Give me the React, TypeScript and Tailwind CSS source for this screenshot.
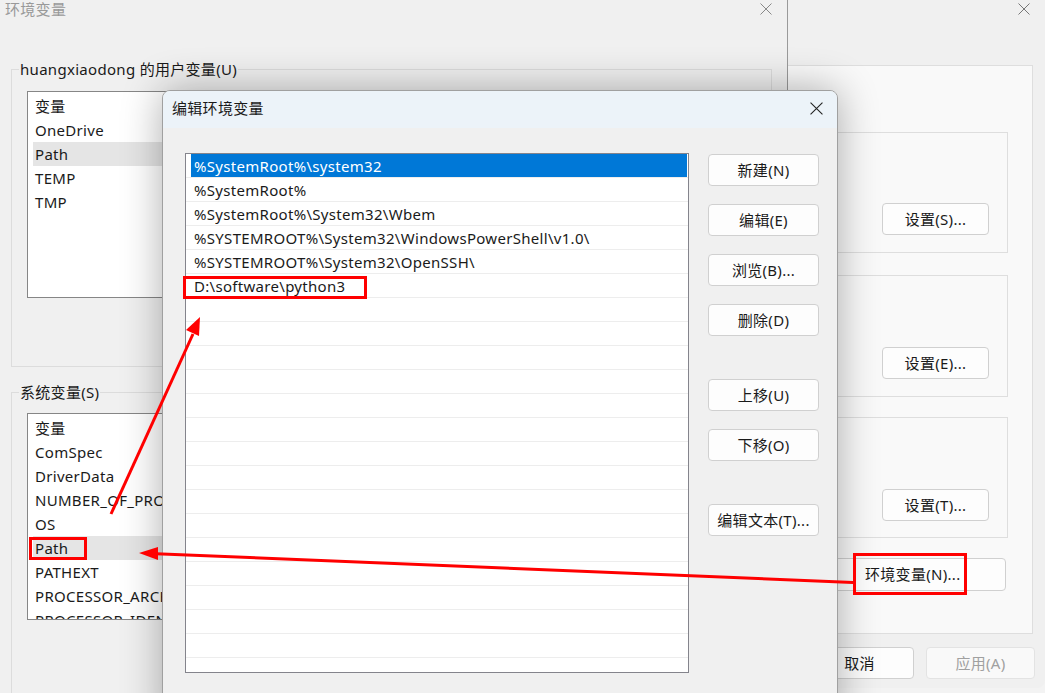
import type { ReactNode } from 'react'

const userVars = ['OneDrive', 'Path', 'TEMP', 'TMP']
const systemVars = [
  'ComSpec',
  'DriverData',
  'NUMBER_OF_PROCESSORS',
  'OS',
  'Path',
  'PATHEXT',
  'PROCESSOR_ARCHITECTURE',
  'PROCESSOR_IDENTIFIER',
]
const pathEntries = [
  '%SystemRoot%\\system32',
  '%SystemRoot%',
  '%SystemRoot%\\System32\\Wbem',
  '%SYSTEMROOT%\\System32\\WindowsPowerShell\\v1.0\\',
  '%SYSTEMROOT%\\System32\\OpenSSH\\',
  'D:\\software\\python3',
]

function CloseIcon({ className }: { className?: string }) {
  return (
    <svg viewBox="0 0 12 12" className={className} fill="none" stroke="currentColor" strokeWidth={1}>
      <path d="M0.5 0.5l11 11M11.5 0.5l-11 11" />
    </svg>
  )
}

function WinButton({
  children,
  className = '',
  disabled,
  alignStart,
}: {
  children: ReactNode
  className?: string
  disabled?: boolean
  alignStart?: boolean
}) {
  return (
    <button
      type="button"
      className={`flex shrink-0 items-center rounded-[4px] border ${alignStart ? 'justify-start' : 'justify-center'} ${
        disabled ? 'border-[#e3e3e3] bg-[#f9f9f9] text-[#a0a0a0]' : 'border-[#d0d0d0] bg-[#fdfdfd] text-[#1a1a1a]'
      } ${className}`}
    >
      {children}
    </button>
  )
}

function VarList({ items, highlight }: { items: string[]; highlight: string }) {
  return (
    <div className="h-[207px] overflow-hidden border border-[#868686] bg-white pt-[2px]">
      <div className="flex h-[24px] items-center pl-[7px]">变量</div>
      {items.map((name) => (
        <div key={name} className="h-[24px] pl-[5px]">
          <div className={`flex h-full items-center whitespace-nowrap pl-[2px] ${name === highlight ? 'bg-[#e5e5e5]' : ''}`}>
            {name}
          </div>
        </div>
      ))}
    </div>
  )
}

// 系统属性 window, mostly hidden behind the other two
function SystemWindow() {
  return (
    <div className="absolute left-[540px] top-0 flex h-[688px] w-[505px] flex-col rounded-br-[8px] bg-[#f0f0f0]">
      <div className="flex h-[18px] items-center justify-end pr-[15px] text-[#777]">
        <CloseIcon className="h-[12px] w-[12px]" />
      </div>
      <div className="mx-[12px] mt-[47px] flex h-[569px] flex-col border border-[#dedede] bg-[#f9f9f9] pr-[24px] pt-[66px]">
        <div className="ml-[24px] flex h-[121px] flex-col items-end justify-end border border-[#dedede] pb-[17px] pr-[18px]">
          <WinButton className="h-[32px] w-[107px]">设置(S)...</WinButton>
        </div>
        <div className="ml-[24px] mt-[22px] flex h-[122px] flex-col items-end justify-end border border-[#dedede] pb-[17px] pr-[18px]">
          <WinButton className="h-[32px] w-[107px]">设置(E)...</WinButton>
        </div>
        <div className="ml-[24px] mt-[20px] flex h-[121px] flex-col items-end justify-end border border-[#dedede] pb-[16px] pr-[18px]">
          <WinButton className="h-[32px] w-[107px]">设置(T)...</WinButton>
        </div>
        <div className="mt-[20px] flex justify-end pr-[2px]">
          <WinButton className="h-[33px] w-[175px] pl-[33px]" alignStart>
            环境变量(N)...
          </WinButton>
        </div>
      </div>
      <div className="mt-[13px] flex justify-end gap-[12px] pr-[10px]">
        <WinButton className="h-[32px] w-[109px]">确定</WinButton>
        <WinButton className="h-[32px] w-[109px]">取消</WinButton>
        <WinButton className="h-[32px] w-[109px]" disabled>
          应用(A)
        </WinButton>
      </div>
    </div>
  )
}

// 环境变量 window (inactive)
function EnvWindow() {
  return (
    <div className="absolute left-0 top-0 flex h-[720px] w-[788px] flex-col border-r border-[#9a9a9a] bg-[#f0f0f0]">
      <div className="flex h-[18px] items-center justify-between pl-[5px] pr-[15px] text-[#999]">
        <span className="leading-[18px]">环境变量</span>
        <CloseIcon className="h-[12px] w-[12px] text-[#888]" />
      </div>
      <fieldset className="ml-[11px] mr-[15px] mt-[41px] h-[308px] border border-[#dcdcdc] px-[7px]">
        <legend className="px-px leading-[20px]">huangxiaodong 的用户变量(U)</legend>
        <div className="mx-[8px] mt-[12px]">
          <VarList items={userVars} highlight="Path" />
        </div>
      </fieldset>
      <fieldset className="ml-[11px] mr-[15px] mt-[15px] h-[320px] border border-[#dcdcdc] px-[7px]">
        <legend className="px-px leading-[20px]">系统变量(S)</legend>
        <div className="mx-[8px] mt-[11px]">
          <VarList items={systemVars} highlight="Path" />
        </div>
      </fieldset>
    </div>
  )
}

// 编辑环境变量 dialog (active)
function EditDialog() {
  const rows = Array.from({ length: 22 }, (_, i) => pathEntries[i] ?? '')
  return (
    <div className="absolute left-[162px] top-[90px] flex h-[640px] w-[676px] flex-col overflow-hidden rounded-t-[8px] border border-[#a0a0a0] bg-[#f0f0f0] shadow-[0_0_40px_rgba(0,0,0,0.32)]">
      <div className="flex h-[37px] shrink-0 items-center justify-between bg-[#ecf3f9] pb-[3px] pl-[9px] pr-[14px]">
        <span>编辑环境变量</span>
        <CloseIcon className="h-[13px] w-[13px] text-[#222]" />
      </div>
      <div className="flex gap-[19px] pl-[22px] pt-[25px]">
        <div className="h-[520px] w-[504px] overflow-hidden border border-[#84848c] bg-white">
          {rows.map((text, i) => (
            <div key={i} className="h-[24px] border-b border-[#ededed]">
              <div
                className={`ml-[5px] mr-px flex h-full items-center whitespace-nowrap pl-[3px] pt-px ${
                  i === 0 ? 'bg-[#0078d7] text-white' : ''
                }`}
              >
                {text}
              </div>
            </div>
          ))}
        </div>
        <div className="flex w-[111px] flex-col pt-[1px]">
          <WinButton className="h-[32px] w-full">新建(N)</WinButton>
          <WinButton className="mt-[18px] h-[32px] w-full">编辑(E)</WinButton>
          <WinButton className="mt-[18px] h-[32px] w-full">浏览(B)...</WinButton>
          <WinButton className="mt-[18px] h-[32px] w-full">删除(D)</WinButton>
          <WinButton className="mt-[43px] h-[32px] w-full">上移(U)</WinButton>
          <WinButton className="mt-[18px] h-[32px] w-full">下移(O)</WinButton>
          <WinButton className="mt-[43px] h-[32px] w-full">编辑文本(T)...</WinButton>
        </div>
      </div>
    </div>
  )
}

// red markup drawn on top of the screenshot
function Annotations() {
  return (
    <svg className="pointer-events-none absolute left-0 top-0" width={1045} height={693} viewBox="0 0 1045 693">
      <g stroke="#ff0000" strokeWidth={3} fill="none">
        <rect x={184.5} y={277.5} width={181} height={20} />
        <rect x={30.5} y={538.5} width={55} height={20} />
        <rect x={854.5} y={554.5} width={111} height={39} />
        <line x1={111} y1={514} x2={193} y2={334} />
        <line x1={853} y1={582.5} x2={156} y2={553.7} />
      </g>
      <g fill="#ff0000">
        <polygon points="200,317 199,336 186,330" />
        <polygon points="139,553 158,547 158,560" />
      </g>
    </svg>
  )
}

export default function App() {
  return (
    <div className="relative h-[693px] w-[1045px] overflow-hidden bg-[#f3f3f3] font-['Noto_Sans','Noto_Sans_CJK_SC',sans-serif] text-[15px] tracking-[0.3px] text-[#1a1a1a]">
      <SystemWindow />
      <EnvWindow />
      <EditDialog />
      <Annotations />
    </div>
  )
}
